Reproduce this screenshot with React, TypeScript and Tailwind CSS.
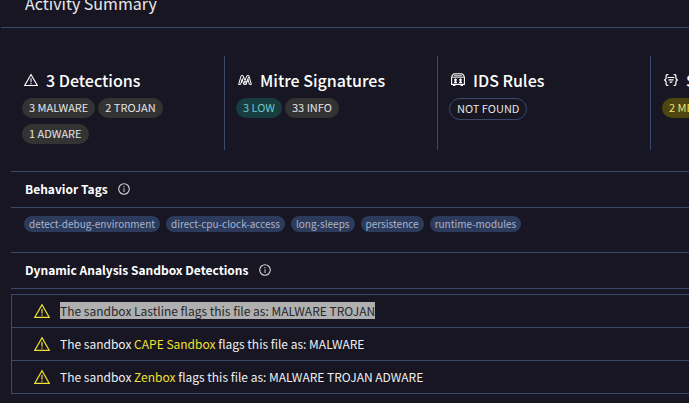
import type { ReactNode } from "react";

function WarningIcon({ className }: { className: string }) {
  return (
    <svg viewBox="0 0 16 16" className={className} fill="none" stroke="currentColor" aria-hidden="true">
      <path d="M8 1.8 15.2 14.3H.8Z" strokeWidth="1.3" />
      <path d="M8 6v4.6M8 11.4v1.4" strokeWidth="1.6" opacity=".75" />
    </svg>
  );
}

function MitreIcon() {
  return (
    <svg viewBox="0 0 14 14" className="size-3.5" fill="none" stroke="currentColor" strokeWidth="1" aria-hidden="true">
      <path d="M.6 11.4 3.2 2.6H5L7 7.4 9 2.6h1.8l2.6 8.8h-2L10 6.4 8 11.4H6L4 6.4l-1.4 5Z" />
      <path d="M3.4 9.6 5.6 4.2M8.4 9.6l2.2-5.4M5.4 11.4 7 7.8l1.6 3.6" />
    </svg>
  );
}

function IdsIcon() {
  return (
    <svg viewBox="0 0 14 14" className="size-3.5" fill="none" stroke="currentColor" aria-hidden="true">
      <path d="M.6 11.4V4.6Q1 1 4 .8h6q3 .2 3.4 3.8v6.8Z" strokeWidth="1.1" />
      <path d="M1.2 4.2h11.6" strokeWidth="1" />
      <path d="M3 2.5h8" strokeWidth="1.4" opacity=".7" />
      <path d="M2 12.5h2.4M9.6 12.5H12" strokeWidth="1.2" />
      <path d="M3 6.9h3M3 9.4h3M8 6.9h3M8 9.4h3" strokeWidth="1.1" />
      <path d="M4.5 5.6v4.6M9.5 5.6v4.6" strokeWidth="1.3" />
    </svg>
  );
}

function BracesIcon() {
  return (
    <svg viewBox="0 0 14 14" className="size-3.5" fill="none" stroke="currentColor" strokeWidth="1.2" aria-hidden="true">
      <path d="M4.4 1.6H3.2Q2.1 1.6 2.1 2.7v2.7L.6 7l1.5 1.6v2.7q0 1.1 1.1 1.1h1.2M9.6 1.6h1.2q1.1 0 1.1 1.1v2.7L13.4 7l-1.5 1.6v2.7q0 1.1-1.1 1.1H9.6" />
      <path d="M3.6 4.5h6.8M4.4 6.8h5.2M5.6 9.2h2.8" />
    </svg>
  );
}

function InfoIcon() {
  return (
    <svg viewBox="0 0 12 12" className="size-3" fill="none" stroke="currentColor" aria-hidden="true">
      <circle cx="6" cy="6" r="5.3" strokeWidth="1.1" />
      <path d="M6 3v1.2M6 5.2V9" strokeWidth="1.2" opacity=".8" />
    </svg>
  );
}

const pillStyles = {
  neutral: "h-5 bg-[#333334] px-[7px] text-[#e4e4e4]",
  low: "h-5 bg-[#173d40] px-[7px] text-[#6fc8c8]",
  medium: "h-5 bg-[#4e460e] px-[7px] text-[#f0e070]",
  empty: "h-[22px] border border-[#3a486b] px-[7px] text-[#e4e4e4]",
};

type Pill = { label: string; kind: keyof typeof pillStyles };

function SummaryCard({ icon, title, pills }: { icon: ReactNode; title: string; pills: Pill[] }) {
  return (
    <section className="w-[213px] shrink-0 border-l border-[#3a486b] pt-3 pr-4 pl-[11px] first:border-l-0">
      <h2 className="flex h-6 items-center gap-2 pl-0.5 text-[16px] leading-6 font-medium whitespace-nowrap text-white">
        {icon}
        {title}
      </h2>
      <ul className="mt-1.5 flex flex-wrap items-start gap-x-[3px] gap-y-1.5">
        {pills.map((p) => (
          <li
            key={p.label}
            className={`flex items-center rounded-full pb-0.5 text-[11px] leading-4 whitespace-nowrap ${pillStyles[p.kind]}`}
          >
            {p.label}
          </li>
        ))}
      </ul>
    </section>
  );
}

function SectionHeading({ children }: { children: string }) {
  return (
    <div className="flex h-[37px] items-center gap-2.5 border-y border-[#3a486b] pb-px pl-3.5">
      <h2 className="text-[12px] leading-4 font-bold text-white">{children}</h2>
      <button type="button" aria-label={`About ${children}`} className="text-[#d4d4d8]">
        <InfoIcon />
      </button>
    </div>
  );
}

const tags = ["detect-debug-environment", "direct-cpu-clock-access", "long-sleeps", "persistence", "runtime-modules"];

const detections = [
  { sandbox: "Lastline", verdict: "MALWARE TROJAN", selected: true },
  { sandbox: "CAPE Sandbox", verdict: "MALWARE", selected: false },
  { sandbox: "Zenbox", verdict: "MALWARE TROJAN ADWARE", selected: false },
];

export default function App() {
  return (
    <main className="min-h-screen overflow-hidden bg-[#171622] font-['Noto_Sans_CJK_SC',sans-serif] text-[#f0f0f0]">
      <header className="ml-px flex h-7 items-end border-b border-[#3a486b] pb-3 pl-6">
        <h1 className="text-[16px] leading-6 text-[#e8e8ea]">Activity Summary</h1>
      </header>

      <div className="mt-7 ml-[11px] flex h-[94px]">
        <SummaryCard
          icon={<WarningIcon className="size-3.5" />}
          title="3 Detections"
          pills={[
            { label: "3 MALWARE", kind: "neutral" },
            { label: "2 TROJAN", kind: "neutral" },
            { label: "1 ADWARE", kind: "neutral" },
          ]}
        />
        <SummaryCard
          icon={<MitreIcon />}
          title="Mitre Signatures"
          pills={[
            { label: "3 LOW", kind: "low" },
            { label: "33 INFO", kind: "neutral" },
          ]}
        />
        <SummaryCard icon={<IdsIcon />} title="IDS Rules" pills={[{ label: "NOT FOUND", kind: "empty" }]} />
        <SummaryCard icon={<BracesIcon />} title="Sigma Rules" pills={[{ label: "2 MEDIUM", kind: "medium" }]} />
      </div>

      <div className="mt-[21px] ml-[11px]">
        <SectionHeading>Behavior Tags</SectionHeading>
        <ul className="flex h-11 items-start gap-1.5 pt-2 pl-[13px]">
          {tags.map((t) => (
            <li
              key={t}
              className="flex h-4 items-center rounded-full bg-[#2c3b5c] px-[5px] text-[10px] leading-4 whitespace-nowrap text-[#a9b4cc]"
            >
              {t}
            </li>
          ))}
        </ul>

        <SectionHeading>Dynamic Analysis Sandbox Detections</SectionHeading>
        <ul className="mt-[5px] border-t border-l border-[#3a486b]">
          {detections.map((d) => (
            <li key={d.sandbox} className="flex h-[33px] items-center gap-2.5 border-b border-[#3a486b] pl-[22px] text-[12px]">
              <WarningIcon className="size-4 text-[#f0e130]" />
              <p className={`mb-0.5 leading-[17px] ${d.selected ? "bg-[#b0b0b0] text-[#27272b]" : ""}`}>
                The sandbox <span className={d.selected ? "" : "text-[#f0e130]"}>{d.sandbox}</span> flags this file as:{" "}
                {d.verdict}
              </p>
            </li>
          ))}
        </ul>
      </div>
    </main>
  );
}
